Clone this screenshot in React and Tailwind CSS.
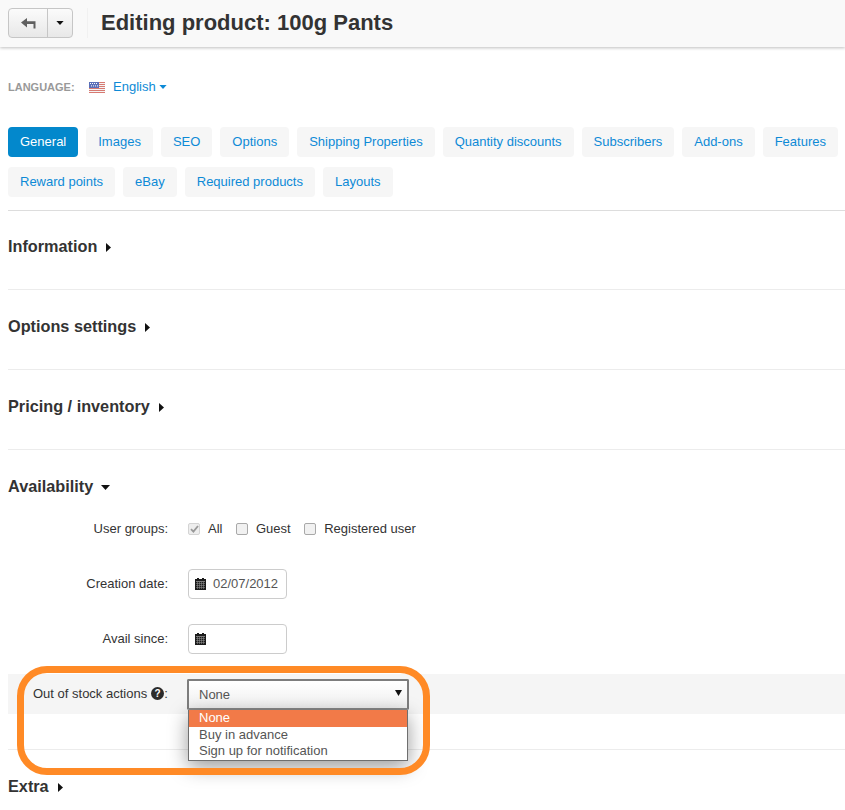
import React from "react";

const row1 = ["Images", "SEO", "Options", "Shipping Properties", "Quantity discounts", "Subscribers", "Add-ons", "Features"];
const row2 = ["Reward points", "eBay", "Required products", "Layouts"];

function Tab({ label, active }) {
  return (
    <div className={"h-[30px] px-3 rounded-[4px] flex items-center text-[13px] shrink-0 " + (active ? "bg-[#0388cc] text-white" : "bg-[#f6f6f6] text-[#0d8ad6]")}>
      {label}
    </div>
  );
}

function Right() {
  return <svg width="5" height="9" viewBox="0 0 5 9" className="ml-[9px] mt-[1px]"><path d="M0 0 L5 4.5 L0 9 Z" fill="#111" /></svg>;
}
function Down({ color = "#111", w = 9, h = 5, cls = "" }) {
  return <svg width={w} height={h} viewBox="0 0 9 5" className={cls}><path d="M0 0 L9 0 L4.5 5 Z" fill={color} /></svg>;
}

function Section({ title, h = 80, head = 73 }) {
  return (
    <div className="border-b border-[#ececec]" style={{ height: h }}>
      <h3 className="flex items-center text-[16.25px] font-bold text-[#333]" style={{ height: head }}>{title}<Right /></h3>
    </div>
  );
}

function Calendar() {
  return (
    <svg width="11" height="12" viewBox="0 0 11 12" className="shrink-0">
      <rect x="0" y="1" width="11" height="11" fill="#1c1c1c" />
      <rect x="2" y="0" width="2" height="2" fill="#1c1c1c" />
      <rect x="7" y="0" width="2" height="2" fill="#1c1c1c" />
      <rect x="1" y="3.2" width="9" height="0.5" fill="#ddd" />
      {[5, 7, 9].map((y) => <rect key={y} x="1" y={y} width="9" height="0.5" fill="#999" />)}
      {[2.5, 4.5, 6.5, 8.5].map((x) => <rect key={x} x={x} y="4" width="0.5" height="7" fill="#999" />)}
    </svg>
  );
}

function Check({ checked, label }) {
  return (
    <label className="flex items-center gap-[8px]">
      <span className={"w-[12px] h-[12px] rounded-[2px] border flex items-center justify-center " + (checked ? "border-[#d4d4d4] bg-[#eeeeee]" : "border-[#a9a9a9] bg-[#f1f1f1]")}>
        {checked && (
          <svg width="9" height="8" viewBox="0 0 9 8"><path d="M1 4.2 L3.4 6.6 L8 1" fill="none" stroke="#999" strokeWidth="1.8" /></svg>
        )}
      </span>
      <span>{label}</span>
    </label>
  );
}

function Flag() {
  return (
    <svg width="16" height="11" viewBox="0 0 16 11" className="mr-[8px]">
      <rect width="16" height="11" fill="#f4f4f4" />
      {[0, 2, 4, 6, 8, 10].map((y) => <rect key={y} y={y} width="16" height="1" fill="#d77a72" />)}
      <rect width="10" height="6" fill="#5a6fb8" />
      {[1, 3, 5, 7].map((x) => <rect key={x} x={x} y="1" width="1" height="1" fill="#fff" />)}
      {[2, 4, 6, 8].map((x) => <rect key={x} x={x} y="3.4" width="1" height="1" fill="#fff" />)}
    </svg>
  );
}

export default function App() {
  return (
    <div className="relative w-[845px] h-[810px] overflow-hidden bg-white text-[13px] text-[#333]" style={{ fontFamily: '"Liberation Sans", Arial, sans-serif' }}>
      <header className="h-[47px] bg-[#f9f9f9] shadow-[0_1px_3px_rgba(0,0,0,0.25)] flex items-center pl-[8px] pb-[1px]">
        <div className="flex h-[30px] w-[65px] rounded-[4px] border border-[#c6c6c6] bg-gradient-to-b from-[#fbfbfb] to-[#e8e8e8]">
          <div className="w-[39px] flex items-center justify-center border-r border-[#c6c6c6]">
            <svg width="15" height="11" viewBox="0 0 15 11">
              <path d="M6 0 L0 4.5 L6 9.5 L6 6 L12.5 6 L12.5 10.5 L14.5 10.5 L14.5 3.2 L6 3.2 Z" fill="#606060" />
            </svg>
          </div>
          <div className="flex-1 flex items-center justify-center">
            <Down w={8} h={4} color="#111" />
          </div>
        </div>
        <div className="ml-[14px] h-[30px] border-l border-[#f1f1f1]" />
        <h1 className="ml-[13px] text-[22px] font-bold text-[#333] leading-none">Editing product: 100g Pants</h1>
      </header>

      <main className="pl-[8px]">
        <div className="h-[34px] mt-[23px] flex items-center">
          <span className="text-[11px] font-bold text-[#999] w-[81px]">LANGUAGE:</span>
          <Flag />
          <span className="text-[#0d8ad6] text-[13px]">English</span>
          <Down color="#0d8ad6" w={8} h={4} cls="ml-[3px] -mt-[1px]" />
        </div>

        <div className="mt-[23px] flex gap-[8px]">
          <Tab label="General" active />
          {row1.map((t) => <Tab key={t} label={t} />)}
        </div>
        <div className="mt-[10px] flex gap-[8px]">
          {row2.map((t) => <Tab key={t} label={t} />)}
        </div>
        <div className="mt-[13px] border-t border-[#dddddd]" />

        <Section title="Information" h={79} head={71} />
        <Section title="Options settings" />
        <Section title="Pricing / inventory" />

        <h3 className="h-[73px] flex items-center text-[16.25px] font-bold text-[#333]">
          Availability
          <Down w={9} h={5} cls="ml-[8px] mt-[1px]" />
        </h3>

        <div className="-mt-[2px] flex items-center h-[16px]">
          <div className="w-[160px] text-right">User groups:</div>
          <div className="ml-[20px] flex gap-[13.5px]">
            <Check checked label="All" />
            <Check label="Guest" />
            <Check label="Registered user" />
          </div>
        </div>

        <div className="mt-[32px] flex items-center h-[30px]">
          <div className="w-[160px] text-right">Creation date:</div>
          <div className="ml-[20px] w-[99px] h-[30px] rounded-[4px] border border-[#cccccc] flex items-center pl-[6px] gap-[7px] text-[#555]">
            <Calendar />
            <span>02/07/2012</span>
          </div>
        </div>

        <div className="mt-[25px] flex items-center h-[30px]">
          <div className="w-[160px] text-right">Avail since:</div>
          <div className="ml-[20px] w-[99px] h-[30px] rounded-[4px] border border-[#cccccc] flex items-center pl-[6px]">
            <Calendar />
          </div>
        </div>

        <div className="mt-[20px] h-[40px] bg-[#f5f5f5] flex items-start">
          <div className="w-[160px] pl-[25px] pt-[12px] flex items-center leading-[15px] whitespace-nowrap">
            Out of stock actions
            <span className="ml-[4px] w-[13px] h-[13px] rounded-full bg-[#2b2b2b] text-white text-[10px] font-bold flex items-center justify-center leading-none">?</span>
            :
          </div>
        </div>

        <div className="mt-[35px] border-t border-[#ececec]" />
        <h3 className="h-[73px] flex items-center text-[16.25px] font-bold text-[#333]">Extra<Right /></h3>
      </main>

      <div className="absolute left-[187px] top-[679px] w-[222px] h-[31px] rounded-[2px] border-2 border-[#7d7d7d] border-b-[#8a8a8a] bg-gradient-to-b from-white to-[#f0f0f0] text-[#555] flex items-center pl-[10px] pt-[1px]">
        None
        <svg width="7" height="6" viewBox="0 0 7 6" className="absolute right-[5px] top-[9px]"><path d="M0 0 L7 0 L3.5 6 Z" fill="#111" /></svg>
      </div>
      <div className="absolute left-[188px] top-[710px] w-[220px] h-[51px] bg-white border border-[#6f6f6f] border-t-0 shadow-[0_6px_20px_rgba(0,0,0,0.4)] text-[#555] leading-[16px]">
        <div className="h-[17px] bg-[#f27a48] text-white pl-[10px] flex items-center pb-[2px]">None</div>
        <div className="pl-[10px] h-[16px] flex items-center">Buy in advance</div>
        <div className="pl-[10px] h-[16px] flex items-center">Sign up for notification</div>
      </div>

      <div className="absolute left-[17px] top-[666px] w-[413px] h-[109px] rounded-[30px] border-[7px] border-[#ff8a26] pointer-events-none" />
    </div>
  );
}
